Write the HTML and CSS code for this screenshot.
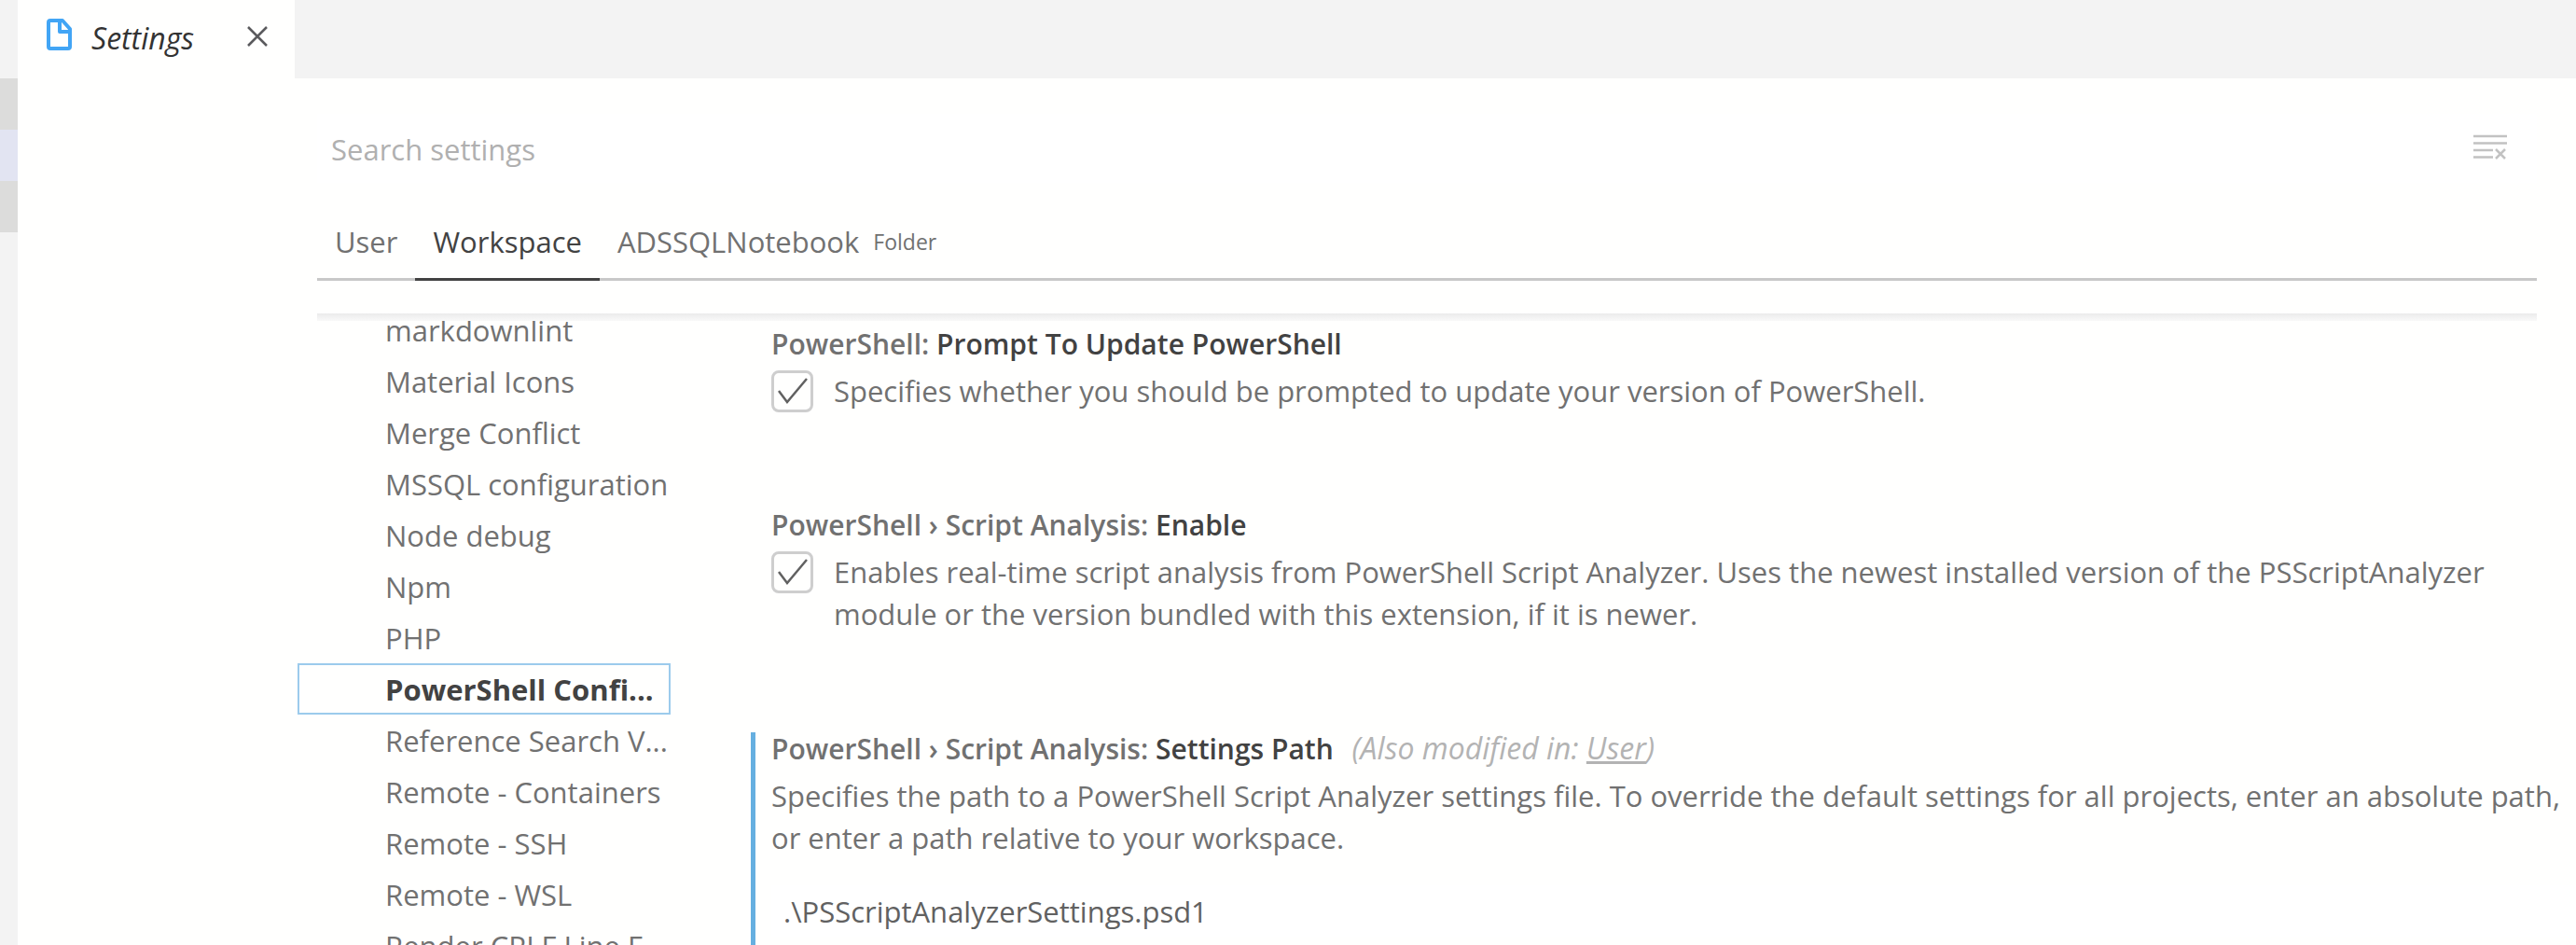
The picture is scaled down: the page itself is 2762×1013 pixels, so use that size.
FILE: index.html
```html
<!DOCTYPE html>
<html lang="en">
<head>
<meta charset="utf-8">
<title>Settings</title>
<link rel="stylesheet" href="styles.css">
</head>
<body>
<div class="app">
  <div class="strip" aria-hidden="true">
    <span class="strip-item"></span>
    <span class="strip-item strip-item-focus"></span>
    <span class="strip-item"></span>
  </div>
  <div class="editor">
    <header class="tabbar">
      <div class="tab">
        <svg class="tab-icon" viewBox="0 0 27 34" aria-hidden="true"><path d="M4 2H17L25 11V30Q25 32 23 32H4Q2 32 2 30V4Q2 2 4 2ZM14 2V14H25" fill="none" stroke="#42a5f5" stroke-width="4" stroke-linejoin="round"/></svg>
        <span class="tab-title">Settings</span>
        <button class="tab-close" aria-label="Close"><svg viewBox="0 0 22 22"><path d="M1 1L21 21M21 1L1 21" fill="none" stroke="#5a5a5d" stroke-width="2.5"/></svg></button>
      </div>
    </header>
    <main class="settings">
      <div class="settings-header">
        <div class="search">
          <input class="search-input" type="text" placeholder="Search settings" aria-label="Search settings">
          <button class="search-clear" aria-label="Clear search"><svg viewBox="0 0 36 28"><path d="M0 3H36M0 10.500H36M0 18H21M0 25.500H21M24 17L34 27M34 17L24 27" fill="none" stroke="#c2c2c2" stroke-width="2.500"/></svg></button>
        </div>
        <div class="scopes">
          <button class="scope">User</button>
          <button class="scope scope-active">Workspace</button>
          <button class="scope">ADSSQLNotebook<span class="scope-kind">Folder</span></button>
        </div>
      </div>
      <div class="settings-body">
        <nav class="toc">
          <a class="toc-row" href="#">markdownlint</a>
          <a class="toc-row" href="#">Material Icons</a>
          <a class="toc-row" href="#">Merge Conflict</a>
          <a class="toc-row" href="#">MSSQL configuration</a>
          <a class="toc-row" href="#">Node debug</a>
          <a class="toc-row" href="#">Npm</a>
          <a class="toc-row" href="#">PHP</a>
          <a class="toc-row toc-row-active" href="#">PowerShell Confi...</a>
          <a class="toc-row" href="#">Reference Search V...</a>
          <a class="toc-row" href="#">Remote - Containers</a>
          <a class="toc-row" href="#">Remote - SSH</a>
          <a class="toc-row" href="#">Remote - WSL</a>
          <a class="toc-row" href="#">Render CRLF Line E...</a>
        </nav>
        <div class="items">
          <section class="item">
            <h2 class="item-title"><span class="item-category">PowerShell:</span> Prompt To Update PowerShell</h2>
            <div class="item-check">
              <input class="checkbox" type="checkbox" id="prompt-update" checked>
              <label class="item-text" for="prompt-update">Specifies whether you should be prompted to update your version of PowerShell.</label>
            </div>
          </section>
          <section class="item">
            <h2 class="item-title"><span class="item-category">PowerShell › Script Analysis:</span> Enable</h2>
            <div class="item-check">
              <input class="checkbox" type="checkbox" id="analysis-enable" checked>
              <label class="item-text" for="analysis-enable">Enables real-time script analysis from PowerShell Script Analyzer. Uses the newest installed version of the PSScriptAnalyzer module or the version bundled with this extension, if it is newer.</label>
            </div>
          </section>
          <section class="item item-modified">
            <h2 class="item-title"><span class="item-category">PowerShell › Script Analysis:</span> Settings Path <span class="item-scope">(Also modified in: <a class="item-scope-link" href="#">User</a>)</span></h2>
            <label class="item-text" for="settings-path">Specifies the path to a PowerShell Script Analyzer settings file. To override the default settings for all projects, enter an absolute path, or enter a path relative to your workspace.</label>
            <input class="item-input" type="text" id="settings-path" value=".\PSScriptAnalyzerSettings.psd1">
          </section>
        </div>
      </div>
    </main>
  </div>
</div>
</body>
</html>
```
FILE: styles.css
```css
* { box-sizing: border-box; }

body {
  margin: 0;
  background: #fffffe;
  color: #717171;
  font-family: "Open Sans", "Noto Sans", sans-serif;
  font-size: 31px;
  line-height: 45px;
}

button, input {
  margin: 0;
  padding: 0;
  border: 0;
  background: none;
  color: inherit;
  font: inherit;
}

svg { display: block; width: 100%; height: 100%; }

.app { display: flex; height: 100vh; overflow: hidden; }

/* Sliver of the side bar list */
.strip { flex: 0 0 19px; padding-top: 84px; background: #f3f3f3; }
.strip-item { display: block; height: 55px; background: #dcdcdb; }
.strip-item-focus { background: #e2e4f2; }

.editor { display: flex; flex: 1; flex-direction: column; min-width: 0; }

.tabbar { display: flex; flex: 0 0 84px; background: #f3f3f3; }
.tab {
  display: flex;
  align-items: flex-start;
  width: 297px;
  padding: 20px 29px 0 31px;
  background: #fffffe;
}
.tab-icon { flex: none; width: 27px; height: 34px; }
.tab-title {
  margin-left: 21px;
  color: #333;
  font-size: 32px;
  font-style: italic;
  line-height: 42px;
}
.tab-close { width: 22px; height: 22px; margin: 8px 0 0 auto; }

.settings {
  display: flex;
  flex: 1;
  flex-direction: column;
  min-height: 0;
  padding: 38px 0 0 300px;
}
.settings-header { margin: 0 42px 35px 21px; }

.search {
  display: flex;
  align-items: center;
  height: 74px;
  padding: 0 32px 0 15px;
  background: #fff;
}
.search-input { flex: 1; height: 100%; padding-top: 2px; outline: 0; }
.search-input::placeholder { color: #b0b0b0; opacity: 1; }
.search-clear { width: 36px; height: 28px; margin-bottom: 4px; }

.scopes {
  display: flex;
  height: 64px;
  margin-top: 41px;
  border-bottom: 3px solid #c8c8c8;
}
.scope {
  display: flex;
  height: 64px;
  padding: 0 19px;
  border-bottom: 3px solid transparent;
}
.scope-active { border-color: #424242; color: #424242; }
.scope-kind { margin-left: 15px; font-size: 23px; }

.settings-body {
  position: relative;
  display: flex;
  flex: 1;
  gap: 86px;
  min-height: 0;
  overflow: hidden;
}
.settings-body::before {
  content: "";
  position: absolute;
  top: 0;
  right: 42px;
  left: 21px;
  height: 8px;
  background: linear-gradient(#ebebeb, #f9f9f9);
}

/* The list is scrolled part of a row past its top edge */
.toc { flex: 0 0 400px; margin-top: -10px; }
.toc-row {
  display: block;
  height: 55px;
  padding: 2px 0 0 94px;
  border: 0 solid #9ccbec;
  color: inherit;
  line-height: 53px;
  text-decoration: none;
  white-space: nowrap;
}
.toc-row-active {
  padding: 0 0 0 92px;
  border-width: 2px;
  color: #424242;
  font-weight: 700;
}

.items { flex: 1; min-width: 0; padding-top: 16px; }
.item { padding: 0 0 104px 17px; border-left: 5px solid transparent; }
.item-modified { border-color: #66afe0; }
.item-title {
  margin: 0 0 11px;
  color: #424242;
  font-size: 30px;
  font-weight: 600;
  line-height: 34px;
}
.item-category { color: #717171; }
.item-scope {
  margin-left: 12px;
  color: #b3b3b3;
  font-size: 32px;
  font-style: italic;
  font-weight: 400;
}
.item-scope-link {
  color: inherit;
  text-decoration-thickness: 3px;
  text-underline-offset: 2px;
}
.item-check { display: flex; gap: 22px; }
.item-text { display: block; }

.checkbox {
  flex: none;
  width: 45px;
  height: 45px;
  border: 3px solid #cecece;
  border-radius: 8px;
  appearance: none;
}
.checkbox:checked {
  background: url("data:image/svg+xml,%3Csvg xmlns='http://www.w3.org/2000/svg' viewBox='0 0 39 39'%3E%3Cpath d='M5 19L14 31L35 6' fill='none' stroke='%23616161' stroke-width='2.500'/%3E%3C/svg%3E") center / 39px 39px no-repeat;
}

.item-input {
  width: 100%;
  height: 55px;
  margin-top: 28px;
  padding: 0 13px;
  background: #fff;
  color: #616161;
  outline: 0;
}
```
